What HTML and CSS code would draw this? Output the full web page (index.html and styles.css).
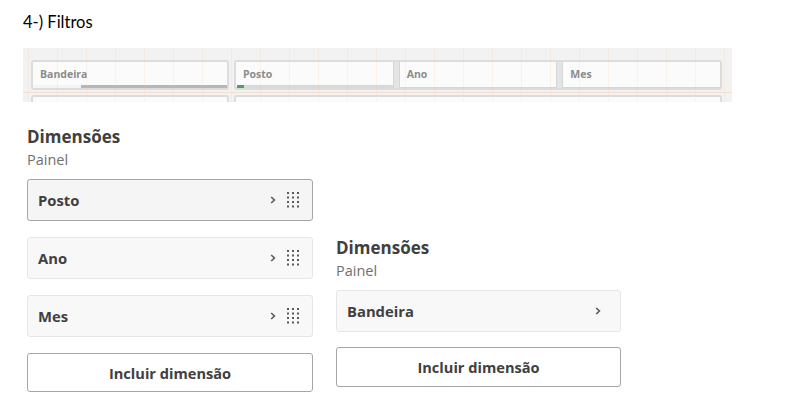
FILE: index.html
```html
<!DOCTYPE html>
<html lang="pt">
<head>
<meta charset="utf-8">
<title>Filtros</title>
<link rel="stylesheet" href="styles.css">
</head>
<body>
<h1 class="title">4-) Filtros</h1>

<div class="filters">
  <div class="frow">
    <div class="fbox fbox-first">
      <span class="flabel">Bandeira</span>
      <div class="fbar"><span class="fbar-light"></span><span class="fbar-dark"></span></div>
    </div>
    <div class="fgroup">
      <div class="fbox fbox-grow">
        <span class="flabel">Posto</span>
        <div class="fbar fbar-posto"><span class="fbar-green"></span><span class="fbar-rest"></span></div>
      </div>
      <div class="fhandle"></div>
      <div class="fbox fbox-grow">
        <span class="flabel">Ano</span>
      </div>
      <div class="fhandle"></div>
      <div class="fbox fbox-grow">
        <span class="flabel">Mes</span>
      </div>
    </div>
  </div>
  <div class="frow frow2">
    <div class="fbox2 fbox-first"></div>
    <div class="fbox2 fbox-wide"></div>
  </div>
  <div class="gridlines"></div>
</div>

<div class="panels">
  <section class="col col-left">
    <h2 class="dim-title">Dimensões</h2>
    <p class="dim-sub">Painel</p>
    <div class="card card-active">
      <span class="card-label">Posto</span>
      <span class="card-icons">
        <svg class="chev" width="6" height="8" viewBox="0 0 6 8"><polyline points="1.2,1 4.4,4 1.2,7" fill="none" stroke="#595959" stroke-width="1.6"/></svg>
        <svg class="dots" width="13" height="16" viewBox="0 0 13 16">
          <g fill="#595959">
            <rect x="0" y="0" width="2" height="2"/><rect x="5" y="0" width="2" height="2"/><rect x="10" y="0" width="2" height="2"/>
            <rect x="0" y="4.5" width="2" height="2"/><rect x="5" y="4.5" width="2" height="2"/><rect x="10" y="4.5" width="2" height="2"/>
            <rect x="0" y="9" width="2" height="2"/><rect x="5" y="9" width="2" height="2"/><rect x="10" y="9" width="2" height="2"/>
            <rect x="0" y="13.5" width="2" height="2"/><rect x="5" y="13.5" width="2" height="2"/><rect x="10" y="13.5" width="2" height="2"/>
          </g>
        </svg>
      </span>
    </div>
    <div class="card">
      <span class="card-label">Ano</span>
      <span class="card-icons">
        <svg class="chev" width="6" height="8" viewBox="0 0 6 8"><polyline points="1.2,1 4.4,4 1.2,7" fill="none" stroke="#595959" stroke-width="1.6"/></svg>
        <svg class="dots" width="13" height="16" viewBox="0 0 13 16">
          <g fill="#595959">
            <rect x="0" y="0" width="2" height="2"/><rect x="5" y="0" width="2" height="2"/><rect x="10" y="0" width="2" height="2"/>
            <rect x="0" y="4.5" width="2" height="2"/><rect x="5" y="4.5" width="2" height="2"/><rect x="10" y="4.5" width="2" height="2"/>
            <rect x="0" y="9" width="2" height="2"/><rect x="5" y="9" width="2" height="2"/><rect x="10" y="9" width="2" height="2"/>
            <rect x="0" y="13.5" width="2" height="2"/><rect x="5" y="13.5" width="2" height="2"/><rect x="10" y="13.5" width="2" height="2"/>
          </g>
        </svg>
      </span>
    </div>
    <div class="card">
      <span class="card-label">Mes</span>
      <span class="card-icons">
        <svg class="chev" width="6" height="8" viewBox="0 0 6 8"><polyline points="1.2,1 4.4,4 1.2,7" fill="none" stroke="#595959" stroke-width="1.6"/></svg>
        <svg class="dots" width="13" height="16" viewBox="0 0 13 16">
          <g fill="#595959">
            <rect x="0" y="0" width="2" height="2"/><rect x="5" y="0" width="2" height="2"/><rect x="10" y="0" width="2" height="2"/>
            <rect x="0" y="4.5" width="2" height="2"/><rect x="5" y="4.5" width="2" height="2"/><rect x="10" y="4.5" width="2" height="2"/>
            <rect x="0" y="9" width="2" height="2"/><rect x="5" y="9" width="2" height="2"/><rect x="10" y="9" width="2" height="2"/>
            <rect x="0" y="13.5" width="2" height="2"/><rect x="5" y="13.5" width="2" height="2"/><rect x="10" y="13.5" width="2" height="2"/>
          </g>
        </svg>
      </span>
    </div>
    <button class="add-btn">Incluir dimensão</button>
  </section>

  <section class="col col-right">
    <h2 class="dim-title">Dimensões</h2>
    <p class="dim-sub">Painel</p>
    <div class="card">
      <span class="card-label">Bandeira</span>
      <span class="card-icons card-icons-single">
        <svg class="chev" width="6" height="8" viewBox="0 0 6 8"><polyline points="1.2,1 4.4,4 1.2,7" fill="none" stroke="#595959" stroke-width="1.6"/></svg>
      </span>
    </div>
    <button class="add-btn add-btn-right">Incluir dimensão</button>
  </section>
</div>
</body>
</html>
```

FILE: styles.css
```css
* { box-sizing: border-box; }

body {
  margin: 0;
  background: #ffffff;
  font-family: "Open Sans", "Noto Sans", sans-serif;
  color: #404040;
}

.title {
  margin: 0;
  padding: 12px 0 0 23px;
  font-family: Lato, "Liberation Sans", sans-serif;
  font-weight: 400;
  font-size: 16.5px;
  line-height: 20px;
  color: #000000;
}

/* filter bar screenshot */
.filters {
  position: relative;
  margin: 16px 0 0 23px;
  width: 709px;
  height: 54px;
  background: #f2f2f2;
  overflow: hidden;
  padding: 12px 0 0 8px;
}

.frow {
  display: flex;
  gap: 5px;
  height: 30px;
}

.frow2 {
  margin-top: 5px;
}

.fbox {
  position: relative;
  display: flex;
  align-items: center;
  height: 30px;
  background: #fbfbfb;
  border: 2px solid #dcdcdc;
  border-radius: 3px;
  padding: 0 7px 2px;
}

.fbox-first { width: 198px; flex: none; }

.fgroup {
  display: flex;
  width: 488px;
  height: 30px;
  border: 2px solid #dcdcdc;
  border-radius: 3px;
  background: #fbfbfb;
}

.fgroup .fbox {
  border: none;
  border-radius: 0;
  height: 26px;
  border-bottom: 1px solid #d6d6d6;
}

.fbox-grow { flex: 1; }

.fhandle {
  width: 7px;
  flex: none;
  background: #e4e4e4;
  border-left: 1px solid #d6d6d6;
  border-right: 1px solid #d6d6d6;
}

.flabel {
  font-family: "Open Sans", sans-serif;
  font-size: 10.5px;
  font-weight: 700;
  color: #8c8c8c;
}

.fbar {
  position: absolute;
  left: 0;
  right: 0;
  bottom: 0;
  height: 3px;
  display: flex;
}

.fbar-light { width: 48px; background: #f4f4f4; }
.fbar-dark { flex: 1; background: #b7b7b7; }
.fbar-posto { bottom: -1px; }
.fbar-green { width: 7px; margin-left: 1px; background: #4aa35a; }
.fbar-rest { flex: 1; background: #d9d9d9; }

.fbox2 {
  height: 30px;
  background: #fbfbfb;
  border: 2px solid #dcdcdc;
  border-radius: 3px;
}

.fbox-wide { width: 488px; }

.gridlines {
  position: absolute;
  inset: 0;
  pointer-events: none;
  background-image:
    linear-gradient(180deg, transparent 44px, rgba(245, 180, 120, 0.3) 44px, rgba(245, 180, 120, 0.3) 45px, transparent 45px),
    linear-gradient(90deg, transparent 28px, rgba(245, 180, 120, 0.12) 28px, rgba(245, 180, 120, 0.12) 29px, transparent 29px);
  background-size: 100% 100%, 29px 100%;
  background-position: 0 0, 6px 0;
}

/* dimension panels */
.panels {
  display: flex;
  align-items: flex-start;
  gap: 23px;
  padding: 23px 0 0 27px;
}

.col {
  display: flex;
  flex-direction: column;
  width: 286px;
}

.col-right {
  width: 285px;
  margin-top: 111px;
}

.dim-title {
  margin: 0;
  font-size: 17px;
  line-height: 24px;
  font-weight: 700;
  color: #404040;
}

.dim-sub {
  margin: 1px 0 0;
  font-size: 14.5px;
  line-height: 20px;
  color: #707070;
}

.card {
  display: flex;
  align-items: center;
  justify-content: space-between;
  height: 42px;
  margin-top: 9px;
  margin-bottom: 7px;
  padding: 0 12px 0 10px;
  background: #f8f8f8;
  border: 1px solid #e6e6e6;
  border-radius: 3px;
}

.card + .card { margin-top: 9px; }

.card-active {
  background: #f5f5f5;
  border-color: #a6a6a6;
}

.card-label {
  font-size: 14.8px;
  font-weight: 700;
  color: #404040;
}

.card-icons {
  display: flex;
  align-items: center;
  gap: 11px;
}

.card-icons-single { padding-right: 7px; }

.add-btn {
  margin-top: 9px;
  height: 39px;
  background: #ffffff;
  border: 1px solid #a6a6a6;
  border-radius: 3px;
  font-family: "Open Sans", sans-serif;
  font-size: 14.6px;
  font-weight: 700;
  color: #404040;
}

.add-btn-right { height: 40px; margin-top: 8px; }
```
